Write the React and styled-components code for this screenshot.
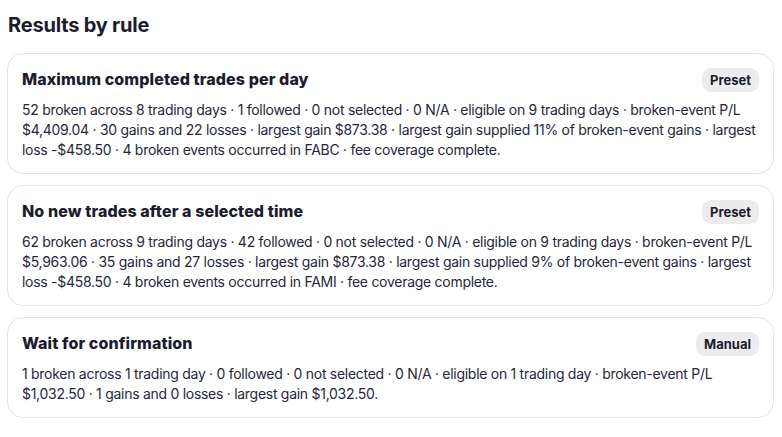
import styled, { createGlobalStyle } from 'styled-components';

const GlobalStyle = createGlobalStyle`
  body {
    margin: 0;
    background: #ffffff;
    font-family: Inter, 'Liberation Sans', sans-serif;
    color: #1b1d2b;
  }
`;

const rules = [
  {
    name: 'Maximum completed trades per day',
    kind: 'Preset',
    summary:
      '52 broken across 8 trading days · 1 followed · 0 not selected · 0 N/A · eligible on 9 trading days · broken-event P/L $4,409.04 · 30 gains and 22 losses · largest gain $873.38 · largest gain supplied 11% of broken-event gains · largest loss -$458.50 · 4 broken events occurred in FABC · fee coverage complete.',
  },
  {
    name: 'No new trades after a selected time',
    kind: 'Preset',
    summary:
      '62 broken across 9 trading days · 42 followed · 0 not selected · 0 N/A · eligible on 9 trading days · broken-event P/L $5,963.06 · 35 gains and 27 losses · largest gain $873.38 · largest gain supplied 9% of broken-event gains · largest loss -$458.50 · 4 broken events occurred in FAMI · fee coverage complete.',
  },
  {
    name: 'Wait for confirmation',
    kind: 'Manual',
    summary:
      '1 broken across 1 trading day · 0 followed · 0 not selected · 0 N/A · eligible on 1 trading day · broken-event P/L $1,032.50 · 1 gains and 0 losses · largest gain $1,032.50.',
  },
];

export default function App() {
  return (
    <>
      <GlobalStyle />
      <Page>
        <Heading>Results by rule</Heading>
        <List>
          {rules.map((rule) => (
            <Card key={rule.name}>
              <CardHeader>
                <RuleName>{rule.name}</RuleName>
                <Badge>{rule.kind}</Badge>
              </CardHeader>
              <Summary>{rule.summary}</Summary>
            </Card>
          ))}
        </List>
      </Page>
    </>
  );
}

const Page = styled.div`
  padding: 12px 8px 0 7px;
`;

const Heading = styled.h2`
  margin: 0 0 15px 1px;
  font-size: 20px;
  line-height: 26px;
  font-weight: 700;
  letter-spacing: -0.2px;
`;

const List = styled.div`
  display: flex;
  flex-direction: column;
  gap: 11px;
`;

const Card = styled.section`
  border: 1px solid #e3e3e9;
  border-radius: 16px;
  padding: 14px 14px 13px 14px;
  background: #fff;
`;

const CardHeader = styled.div`
  display: flex;
  align-items: center;
  justify-content: space-between;
  gap: 12px;
`;

const RuleName = styled.h3`
  margin: -2px 0 0 0;
  font-size: 16px;
  line-height: 24px;
  font-weight: 800;
  letter-spacing: 0.1px;
`;

const Badge = styled.span`
  flex-shrink: 0;
  background: #ececef;
  border-radius: 9px;
  padding: 0 8px;
  height: 24px;
  display: inline-flex;
  align-items: center;
  font-size: 13px;
  font-weight: 700;
`;

const Summary = styled.p`
  margin: 8px 0 0 0;
  font-size: 14px;
  line-height: 20px;
  letter-spacing: -0.28px;
  color: #262838;
`;
